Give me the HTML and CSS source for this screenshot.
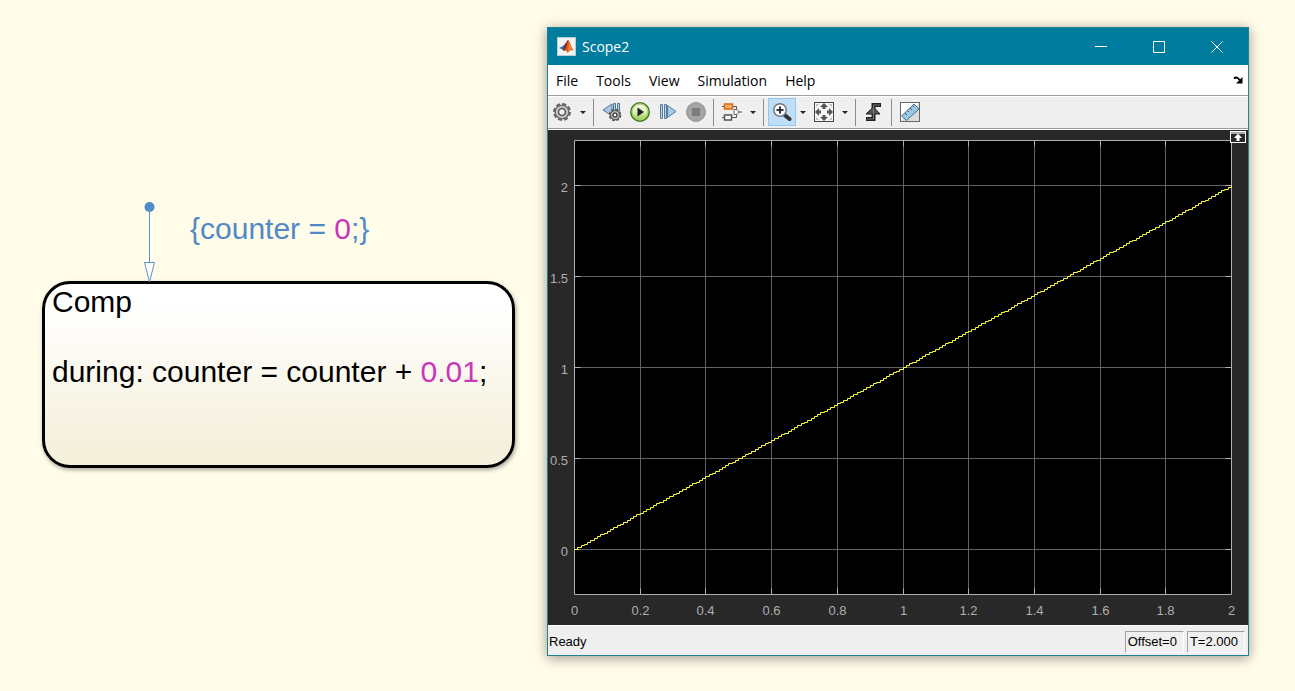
FILE: index.html
```html
<!DOCTYPE html>
<html lang="en">
<head>
    <meta charset="UTF-8">
    <meta name="viewport" content="width=device-width, initial-scale=1.0">
    <title>Counter chart</title>
    <link rel="stylesheet" href="styles.css">
</head>
<body>
    <main class="workspace">
        <section class="chart">
            <div class="transition">
                <svg class="arrow" width="16" height="82" viewBox="0 0 16 82">
                    <circle cx="7.5" cy="5" r="5" fill="#4f8bc9"/>
                    <path d="M7.5 5V60" stroke="#5b92cc" fill="none"/>
                    <path d="M2.5 60.5H12.5L7.5 80Z" stroke="#5b92cc" fill="#fff"/>
                </svg>
                <p class="action">{counter = <span class="number">0</span>;}</p>
            </div>
            <div class="state">
                <h1 class="state-name">Comp</h1>
                <p class="state-code">during: counter = counter + <span class="number">0.01</span>;</p>
            </div>
        </section>

        <section class="window">
            <header class="titlebar">
                <svg class="app-icon" width="19" height="19" viewBox="0 0 19 19">
                    <rect x=".5" y=".5" width="18" height="18" fill="#f3f3f3" stroke="#b8cdd4"/>
                    <path d="M2 11L6 9L8 7L10 9L7 14L5.5 12.5Z" fill="#2f6fa8"/>
                    <path d="M8 7C10 5 10 3 11.5 3L10.5 10L7 14L6 12.5Z" fill="#7d2b22"/>
                    <path d="M11.5 3C13 5 14.5 11 17 14C14.5 12 13 13 10.5 16C10 14 9 13 7 14C9.5 11 10 6 11.5 3Z" fill="#d9541e"/>
                    <path d="M11.5 4C12 7 12 10 10.5 15C13 12 13.5 12 15 12C13.5 9 12.5 6 11.5 4Z" fill="#f08a2a"/>
                </svg>
                <h2 class="window-title">Scope2</h2>
                <div class="window-controls">
                    <button class="control" aria-label="Minimize"><svg width="12" height="12"><path d="M0 5.5H12"/></svg></button>
                    <button class="control" aria-label="Maximize"><svg width="12" height="12"><path d="M.5 .5H11.5V11.5H.5Z"/></svg></button>
                    <button class="control" aria-label="Close"><svg width="12" height="12"><path d="M.5 .5L11.5 11.5M11.5 .5L.5 11.5"/></svg></button>
                </div>
            </header>

            <nav class="menubar">
                <button class="menu">File</button>
                <button class="menu">Tools</button>
                <button class="menu">View</button>
                <button class="menu">Simulation</button>
                <button class="menu">Help</button>
                <button class="dock" aria-label="Dock window">
                    <svg width="10" height="8" viewBox="0 0 10 8"><path d="M1 2.5Q4 0 6.5 4" stroke="#000" stroke-width="2" fill="none"/><path d="M9.5 1V7.5H3Z" fill="#000"/></svg>
                </button>
            </nav>

            <div class="toolbar">
                <button class="tool" aria-label="Configuration">
                    <svg width="20" height="20" viewBox="0 0 20 20">
                        <circle cx="10" cy="10" r="8" fill="none" stroke="#666" stroke-width="2" stroke-dasharray="4 2.28"/>
                        <circle cx="10" cy="10" r="6.8" fill="#cfcfcf" stroke="#6c6c6c" stroke-width="1.5"/>
                        <circle cx="10" cy="10" r="3.5" fill="#f0f0f0" stroke="#555" stroke-width="1.6"/>
                    </svg>
                </button>
                <button class="caret" aria-label="Configuration options"></button>
                <span class="separator"></span>
                <button class="tool" aria-label="Step back">
                    <svg width="20" height="20" viewBox="0 0 20 20">
                        <path d="M1 8L10 2V14Z" fill="#a9c8e4" stroke="#4f7495"/>
                        <path d="M11.5 1.5H13.5V9H11.5ZM15.5 1.5H17.5V9H15.5Z" fill="#bcd6ec" stroke="#4f7495"/>
                        <circle cx="13" cy="13" r="5.3" fill="#ccc" stroke="#555" stroke-width="2" stroke-dasharray="2.6 1.56"/>
                        <circle cx="13" cy="13" r="4.5" fill="#d0d0d0" stroke="#666" stroke-width="1.5"/>
                        <circle cx="13" cy="13" r="2" fill="#fff" stroke="#444" stroke-width="1.5"/>
                    </svg>
                </button>
                <button class="tool" aria-label="Run">
                    <svg width="22" height="22" viewBox="0 0 22 22">
                        <defs><linearGradient id="run" x1="0" y1="0" x2="0" y2="1"><stop offset="0" stop-color="#fafdf2"/><stop offset=".5" stop-color="#dcf0bb"/><stop offset="1" stop-color="#8dc63f"/></linearGradient></defs>
                        <circle cx="11" cy="11" r="9.2" fill="url(#run)" stroke="#4d7c22" stroke-width="1.6"/>
                        <circle cx="11" cy="11" r="7.8" fill="none" stroke="#a4d264"/>
                        <path d="M8.5 6.5L15 11L8.5 15.5Z" fill="#222"/>
                    </svg>
                </button>
                <button class="tool" aria-label="Step forward">
                    <svg width="18" height="18" viewBox="0 0 18 18">
                        <path d="M1.5 1.5H3.5V15.5H1.5ZM5.5 1.5H7.5V15.5H5.5Z" fill="#bcd6ec" stroke="#56799a"/>
                        <path d="M8.5 2.5L17 8.5L8.5 14.5Z" fill="#aacbe8" stroke="#56799a"/>
                    </svg>
                </button>
                <button class="tool" aria-label="Stop">
                    <svg width="22" height="22" viewBox="0 0 22 22">
                        <circle cx="11" cy="11" r="9.5" fill="#a4a4a4" stroke="#989898"/>
                        <rect x="7" y="7" width="8" height="8" fill="#7d7d7d"/>
                    </svg>
                </button>
                <span class="separator"></span>
                <button class="tool" aria-label="Signal selector">
                    <svg width="20" height="20" viewBox="0 0 20 20">
                        <path d="M0 4.5H3M10 4.5H14.5V8M0 15.5H3M10 15.5H14.5V12M17 10H20" stroke="#555" fill="none"/>
                        <rect x="2.5" y="2" width="8" height="5" fill="#f9b060" stroke="#d9661a" stroke-width="1.5"/>
                        <rect x="2.5" y="13" width="7" height="5" fill="#fff" stroke="#555" stroke-width="1.5"/>
                        <path d="M12 7.5H15L17 10L15 12.5H12Z" fill="#fff" stroke="#666"/>
                    </svg>
                </button>
                <button class="caret" aria-label="Signal options"></button>
                <span class="separator"></span>
                <button class="tool active" aria-label="Zoom">
                    <svg width="20" height="20" viewBox="0 0 20 20">
                        <path d="M12 12.5L17.5 17" stroke="#333" stroke-width="4" stroke-linecap="round"/>
                        <circle cx="8" cy="8" r="6.3" fill="#f7fbff" stroke="#777" stroke-width="1.5"/>
                        <path d="M4.5 8H11.5M8 4.5V11.5" stroke="#333" stroke-width="2"/>
                    </svg>
                </button>
                <button class="caret" aria-label="Zoom options"></button>
                <button class="tool" aria-label="Fit to view">
                    <svg width="22" height="22" viewBox="0 0 22 22">
                        <rect x="1.5" y="1.5" width="19" height="19" fill="#f6f6f6" stroke="#444"/>
                        <path d="M11 2L15 6H12.5V8H9.5V6H7ZM11 20L15 16H12.5V14H9.5V16H7ZM2 11L6 7V9.5H8V12.5H6V15ZM20 11L16 7V9.5H14V12.5H16V15Z" fill="#555"/>
                        <path d="M3 6V3H6ZM16 3H19V6ZM3 16V19H6ZM19 16V19H16Z" fill="#bbb"/>
                    </svg>
                </button>
                <button class="caret" aria-label="Fit options"></button>
                <span class="separator"></span>
                <button class="tool" aria-label="Trigger">
                    <svg width="20" height="20" viewBox="0 0 20 20">
                        <path d="M2 17H9.5V3H17" stroke="#222" stroke-width="4" fill="none"/>
                        <path d="M2 12L9.5 5L16 12Z" fill="#555" stroke="#222"/>
                        <path d="M3 17H9.5V3H16" stroke="#777" fill="none"/>
                    </svg>
                </button>
                <span class="separator"></span>
                <button class="tool" aria-label="Measurements">
                    <svg width="22" height="22" viewBox="0 0 22 22">
                        <rect x="1.5" y="1.5" width="19" height="19" fill="#dcdcdc" stroke="#666"/>
                        <path d="M2 20V2H20Z" fill="#fff"/>
                        <path d="M2.5 15L15 3L20 8L7.5 19.5Z" fill="#9cc6e2" stroke="#456f8c"/>
                        <path d="M6 12L8 14M8.5 9.5L10 11M11 7L13 9M13.5 4.5L15 6" stroke="#355f7c"/>
                    </svg>
                </button>
            </div>

            <div class="display">
                <svg class="plot" id="plot" viewBox="0 0 700 495"></svg>
                <button class="maximize-axes" aria-label="Maximize axes">
                    <svg width="16" height="12" viewBox="0 0 16 12">
                        <rect x=".5" y=".5" width="15" height="11" fill="#282828" stroke="#fff"/>
                        <path d="M1 2H15" stroke="#aaa" stroke-width="2"/>
                        <path d="M8 2.5L12 7H9.5V10H6.5V7H4Z" fill="#fff"/>
                    </svg>
                </button>
            </div>

            <footer class="statusbar">
                <span class="status">Ready</span>
                <span class="field">Offset=0</span>
                <span class="field">T=2.000</span>
            </footer>
        </section>
    </main>
    <script src="script.js"></script>
</body>
</html>
```
FILE: styles.css
```css
* {
    margin: 0;
    padding: 0;
    box-sizing: border-box;
}

body {
    background: #fffcea;
    color: #000;
    font-family: "Liberation Sans", Arial, sans-serif;
    font-size: 13px;
}

button {
    border: none;
    background: none;
    font: inherit;
    color: inherit;
}

svg {
    display: block;
}

.workspace {
    display: grid;
    grid-template-columns: 473fr 702fr;
    align-items: start;
    gap: 32px;
    padding: 27px 46px 34px 42px;
}

/* State chart */
.chart {
    padding-top: 175px;
    font-size: 30px;
    line-height: 36px;
}

.transition {
    display: flex;
    gap: 32px;
    height: 79px;
    padding-left: 100px;
    color: #5089c6;
}

.arrow {
    position: relative;
    flex: none;
}

.action {
    padding-top: 9px;
    white-space: nowrap;
}

.number {
    color: #c936b9;
}

.state {
    min-height: 187px;
    padding: 0 7px;
    border: 3px solid #000;
    border-radius: 28px;
    background: linear-gradient(#fff 10%, #f5f0dc 90%);
    box-shadow: 1px 2px 4px rgba(0, 0, 0, 0.35);
}

.state-name {
    font-size: 30px;
    font-weight: normal;
}

.state-code {
    padding-top: 34px;
    white-space: nowrap;
}

/* Scope window */
.window {
    border: 1px solid #1a8391;
    background: #efefef;
    box-shadow: 0 2px 12px rgba(0, 0, 0, 0.4);
}

.titlebar {
    display: flex;
    align-items: center;
    gap: 6px;
    height: 37px;
    padding: 0 2px 0 9px;
    background: #007c9e;
    color: #fff;
    font-family: "Open Sans", "Noto Sans", sans-serif;
}

.window-title {
    flex: 1;
    font-size: 14px;
    font-weight: normal;
}

.window-controls {
    display: flex;
}

.control {
    display: flex;
    align-items: center;
    justify-content: center;
    width: 58px;
    height: 37px;
}

.control path {
    fill: none;
    stroke: #fff;
}

.menubar {
    display: flex;
    align-items: center;
    gap: 18px;
    height: 31px;
    padding: 0 5px 0 8px;
    border-bottom: 1px solid #a0a0a0;
    background: #fff;
    font-family: "Open Sans", "Noto Sans", sans-serif;
    font-size: 14px;
}

.dock {
    margin-left: auto;
}

.toolbar {
    display: flex;
    align-items: center;
    height: 34px;
    padding-bottom: 2px;
    border-top: 1px solid #fff;
    border-bottom: 1px solid #fff;
    box-shadow: inset 0 -1px #9a9a9a;
}

.tool {
    display: flex;
    align-items: center;
    justify-content: center;
    width: 28px;
    height: 28px;
}

.tool.active {
    border: 1px solid #96c8ef;
    background: #bfdff8;
}

.caret {
    display: flex;
    justify-content: center;
    width: 14px;
}

.caret::after {
    content: "";
    border: 3px solid transparent;
    border-top-color: #222;
    border-bottom: none;
}

.separator {
    width: 1px;
    height: 27px;
    margin: 0 4px 0 3px;
    background: #8c8c8c;
}

.display {
    position: relative;
    background: #282828;
}

.plot {
    width: 100%;
    height: auto;
}

.plot-area {
    fill: #000;
}

.grid-line {
    stroke: #626262;
}

.axis {
    fill: none;
    stroke: #afafaf;
}

.signal {
    fill: none;
    stroke: #ffff3c;
}

.tick-label {
    fill: #afafaf;
    font-size: 13px;
}

.x-label {
    text-anchor: middle;
}

.y-label {
    text-anchor: end;
}

.maximize-axes {
    position: absolute;
    top: 1px;
    right: 2px;
}

.statusbar {
    display: flex;
    align-items: center;
    gap: 3px;
    height: 30px;
    padding: 2px 3px 0 1px;
    border-top: 1px solid #fff;
}

.status {
    flex: 1;
}

.field {
    height: 22px;
    padding: 0 6px 0 2px;
    border: 1px solid #fff;
    border-top-color: #a0a0a0;
    border-left-color: #a0a0a0;
    line-height: 20px;
}
```
FILE: script.js
```javascript
const plot = document.getElementById('plot');
const area = { left: 26.5, right: 683.5, top: 10.5, bottom: 464.5 };
const xPos = t => area.left + Math.round(t * 328.5);
const yPos = v => 419.5 - Math.round(v * 182);

let grid = '';
let ticks = '';
let labels = '';

for (let i = 0; i <= 10; i++) {
    const x = xPos(i / 5);
    if (i > 0 && i < 10) {
        grid += `M${x} ${area.top}V${area.bottom}`;
        ticks += `M${x} ${area.top}v6M${x} ${area.bottom}v-6`;
    }
    labels += `<text class="tick-label x-label" x="${x}" y="485">${i / 5}</text>`;
}

for (let i = 0; i <= 4; i++) {
    const y = yPos(i / 2);
    grid += `M${area.left} ${y}H${area.right}`;
    ticks += `M${area.left} ${y}h6M${area.right} ${y}h-6`;
    labels += `<text class="tick-label y-label" x="20" y="${y + 6}">${i / 2}</text>`;
}

// The counter holds its value between samples, so the signal is a staircase
let signal = `M${xPos(0)} ${yPos(0)}`;
for (let n = 1; n <= 200; n++) {
    signal += `H${xPos(n / 100)}V${yPos(n / 100)}`;
}

plot.innerHTML = `
    <rect class="plot-area" x="26" y="10" width="658" height="455"/>
    <path class="grid-line" d="${grid}"/>
    <path class="axis" d="M${area.left} ${area.top}H${area.right}V${area.bottom}H${area.left}Z${ticks}"/>
    <path class="signal" d="${signal}"/>
    ${labels}`;
```
